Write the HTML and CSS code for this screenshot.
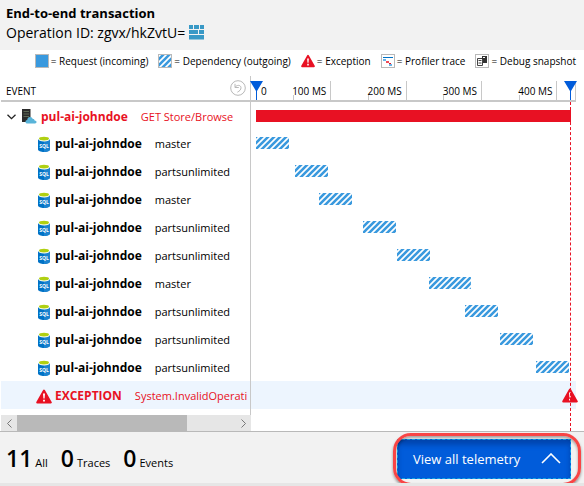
FILE: index.html
```html
<!DOCTYPE html>
<html lang="en">
<head>
<meta charset="utf-8">
<title>End-to-end transaction</title>
<link rel="stylesheet" href="styles.css">
</head>
<body>
<svg class="defs" aria-hidden="true">
  <defs>
    <pattern id="hatch" width="6" height="6" patternUnits="userSpaceOnUse">
      <rect width="6" height="6" fill="#fff"/>
      <path d="M-2 2L2 -2M-1 7L7 -1M4 8L8 4" stroke="#3999de" stroke-width="2.6"/>
    </pattern>
    <symbol id="warn" viewBox="0 0 16 15">
      <path d="M8 1.500L14.800 13.500H1.200Z" fill="#e81123" stroke="#e81123" stroke-width="2" stroke-linejoin="round"/>
      <path d="M7 4.500h2l-.4 5H7.400zM7.100 10.700h1.800v1.800H7.100z" fill="#fff"/>
    </symbol>
    <symbol id="sql" viewBox="0 0 14 16">
      <path d="M1 3v10.500c0 1.300 2.700 2.500 6 2.500s6-1.200 6-2.500V3z" fill="#0072c6"/>
      <path d="M7 3h6v10.500C13 14.800 10.300 16 7 16z" fill="#1c83cf"/>
      <ellipse cx="7" cy="2.800" rx="6" ry="2.600" fill="#fff"/>
      <ellipse cx="7" cy="2.600" rx="5" ry="1.900" fill="#b0d012"/>
      <text x="7" y="11.500" text-anchor="middle" class="sql-text">SQL</text>
    </symbol>
  </defs>
</svg>

<header class="top">
  <h1>End-to-end transaction</h1>
  <p>Operation ID: zgvx/hkZvtU=
    <svg class="grid-icon" viewBox="0 0 15 15"><path d="M0 0h4v4H0zM5 0h5v4H5zM11 0h4v4h-4zM0 5h9v4H0zM10 5h5v4h-5zM0 10h15v4.500H0z" fill="#3999c6"/></svg>
  </p>
</header>

<ul class="legend">
  <li><svg viewBox="0 0 14 14"><rect x=".5" y=".5" width="13" height="13" fill="#3999de" stroke="#b9b9b9"/></svg>= Request (incoming)</li>
  <li><svg viewBox="0 0 14 14"><rect x=".5" y=".5" width="13" height="13" fill="url(#hatch)" stroke="#b9b9b9"/></svg>= Dependency (outgoing)</li>
  <li><svg><use href="#warn"/></svg>= Exception</li>
  <li><svg viewBox="0 0 14 14"><rect x=".5" y=".5" width="13" height="13" fill="#fff" stroke="#b9b9b9"/><path d="M2 3.500h10" stroke="#0072c6"/><path d="M2 6h3M8 11h3" stroke="#3999de" stroke-width="1.500"/><path d="M5 8h3" stroke="#e81123" stroke-width="1.500"/><path d="M8 9.500h2" stroke="#e81123"/></svg>= Profiler trace</li>
  <li><svg viewBox="0 0 14 14"><rect x=".5" y=".5" width="13" height="13" fill="#fff" stroke="#b9b9b9"/><path d="M2.500 4.500h5v7h-5z" fill="#fff" stroke="#444"/><path d="M3.500 6.500h3M3.500 9h3" stroke="#444"/><path d="M7 2h5v7H8V5H7z" fill="#333"/><path d="M8 3.500h2" stroke="#fff"/></svg>= Debug snapshot</li>
</ul>

<main class="chart">
  <div class="row axis">
    <div class="name">
      <span class="title">EVENT</span>
      <button class="reset" aria-label="Reset zoom"><svg viewBox="0 0 16 16"><circle cx="8" cy="8" r="7.300"/><path d="M5 3.800v3.700h3.800M5.200 7.200C6.500 4.800 10.800 4.600 11 7.700c.1 2-1.500 3.300-3.600 4.500"/></svg></button>
    </div>
    <div class="scale">
      <span class="zero">0</span>
      <div class="ticks">
        <span>100 MS</span><span>200 MS</span><span>300 MS</span><span>400 MS</span>
      </div>
      <svg class="marker start" viewBox="0 0 13 19"><path d="M0 0h13L7 10v9H6v-9z"/></svg>
      <svg class="marker end" viewBox="0 0 13 19"><path d="M0 0h13L7 10v9H6v-9z"/></svg>
    </div>
  </div>

  <div class="row root">
    <div class="name">
      <svg class="chevron" viewBox="0 0 9 6"><path d="M.5 .7L4.500 4.700L8.500 .7"/></svg>
      <svg class="server" viewBox="0 0 16 15"><path d="M1 0h8.500v13H1z" fill="#2b2b2b"/><path d="M2.500 2.500h5.500M2.500 5h5.500M2.500 7.500h5.500" stroke="#5e6b56"/><path d="M6.500 14.500C4 14.500 3.700 11.200 6.200 11c.2-2 1.200-3 2.800-3 1.500 0 2.400.8 2.800 2 1.200-.1 1.700.6 1.800 1.500 2.600.2 2.400 3 .4 3z" fill="#59b4d9"/></svg>
      <b>pul-ai-johndoe</b><span>GET Store/Browse</span>
    </div>
    <div class="track"><i class="bar"></i></div>
  </div>
  <div class="row"><div class="name"><svg class="db"><use href="#sql"/></svg><b>pul-ai-johndoe</b><span>master</span></div><div class="track"><svg class="dep" style="margin-left:0%"><rect width="100%" height="100%" fill="url(#hatch)"/></svg></div></div>
  <div class="row"><div class="name"><svg class="db"><use href="#sql"/></svg><b>pul-ai-johndoe</b><span>partsunlimited</span></div><div class="track"><svg class="dep" style="margin-left:12.4%"><rect width="100%" height="100%" fill="url(#hatch)"/></svg></div></div>
  <div class="row"><div class="name"><svg class="db"><use href="#sql"/></svg><b>pul-ai-johndoe</b><span>master</span></div><div class="track"><svg class="dep" style="margin-left:20%"><rect width="100%" height="100%" fill="url(#hatch)"/></svg></div></div>
  <div class="row"><div class="name"><svg class="db"><use href="#sql"/></svg><b>pul-ai-johndoe</b><span>partsunlimited</span></div><div class="track"><svg class="dep" style="margin-left:34%"><rect width="100%" height="100%" fill="url(#hatch)"/></svg></div></div>
  <div class="row"><div class="name"><svg class="db"><use href="#sql"/></svg><b>pul-ai-johndoe</b><span>partsunlimited</span></div><div class="track"><svg class="dep" style="margin-left:44.8%"><rect width="100%" height="100%" fill="url(#hatch)"/></svg></div></div>
  <div class="row"><div class="name"><svg class="db"><use href="#sql"/></svg><b>pul-ai-johndoe</b><span>master</span></div><div class="track"><svg class="dep" style="margin-left:55%;width:13.3%"><rect width="100%" height="100%" fill="url(#hatch)"/></svg></div></div>
  <div class="row"><div class="name"><svg class="db"><use href="#sql"/></svg><b>pul-ai-johndoe</b><span>partsunlimited</span></div><div class="track"><svg class="dep" style="margin-left:66.4%"><rect width="100%" height="100%" fill="url(#hatch)"/></svg></div></div>
  <div class="row"><div class="name"><svg class="db"><use href="#sql"/></svg><b>pul-ai-johndoe</b><span>partsunlimited</span></div><div class="track"><svg class="dep" style="margin-left:77.5%"><rect width="100%" height="100%" fill="url(#hatch)"/></svg></div></div>
  <div class="row"><div class="name"><svg class="db"><use href="#sql"/></svg><b>pul-ai-johndoe</b><span>partsunlimited</span></div><div class="track"><svg class="dep" style="margin-left:88.9%"><rect width="100%" height="100%" fill="url(#hatch)"/></svg></div></div>
  <div class="row exception">
    <div class="name"><svg class="alert"><use href="#warn"/></svg><b>EXCEPTION</b><span>System.InvalidOperati</span></div>
    <div class="track"><svg class="pin"><use href="#warn"/></svg></div>
  </div>
  <div class="spacer"></div>
  <div class="scrollbar">
    <button aria-label="Scroll left"><svg viewBox="0 0 5 9"><path d="M4.500 .5L.5 4.500L4.500 8.500"/></svg></button>
    <div class="rail"><div class="thumb"></div></div>
    <button aria-label="Scroll right"><svg viewBox="0 0 5 9"><path d="M.5 .5L4.500 4.500L.5 8.500"/></svg></button>
  </div>
  <div class="endline"></div>
</main>

<footer class="bottom">
  <dl>
    <div><dd>11</dd><dt>All</dt></div>
    <div><dd>0</dd><dt>Traces</dt></div>
    <div><dd>0</dd><dt>Events</dt></div>
  </dl>
  <div class="action">
    <button class="view">View all telemetry<svg viewBox="0 0 20 11"><path d="M1 10L10 1L19 10"/></svg></button>
    <div class="ring"></div>
  </div>
</footer>
</body>
</html>
```
FILE: styles.css
```css
* { box-sizing: border-box; }
body {
  margin: 0;
  background: #e6e6e6;
  color: #000;
  font: 12px/16px "Open Sans", "Noto Sans", sans-serif;
}
svg { display: block; flex: none; }
button { border: 0; padding: 0; background: none; font: inherit; }
.defs { position: absolute; width: 0; height: 0; }
.sql-text { font: bold 5px "Open Sans", sans-serif; fill: #fff; }

.top { background: #f2f2f2; height: 50px; padding: 4px 6px; }
.top h1 { margin: 0; font-size: 13px; line-height: 19px; }
.top p { margin: 0; display: flex; align-items: center; gap: 4px; font-size: 14px; line-height: 19px; }
.grid-icon { width: 15px; height: 15px; }

.legend {
  margin: 0;
  height: 26px;
  padding: 0 8px 4px;
  background: #fff;
  list-style: none;
  display: flex;
  justify-content: flex-end;
  align-items: center;
  gap: 10px;
  font-size: 10px;
  white-space: nowrap;
}
.legend li { display: flex; align-items: center; gap: 2px; }
.legend svg { width: 14px; height: 14px; }

.chart { position: relative; background: #fff; padding: 0 8px 0 1px; }
.row { display: grid; grid-template-columns: 250px 1fr; height: 28px; }
.root { height: 27px; }
.name {
  display: flex;
  align-items: center;
  min-width: 0;
  padding: 2px 0 0 36px;
  border-right: 1px solid #c8c8c8;
  overflow: hidden;
  white-space: nowrap;
}
.name b { margin-left: 4px; }
.name span { margin-left: 13px; font-size: 11px; }
.track { position: relative; display: flex; align-items: center; padding: 0 5px; }

.axis { height: 26px; border-bottom: 2px solid #c8c8c8; }
.axis .name { padding: 0 4px 0 5px; justify-content: space-between; }
.axis .title { margin: 0; font-size: 10px; padding-top: 6px; }
.reset svg { width: 16px; height: 16px; fill: none; stroke: #b8b8b8; }
.scale { position: relative; margin: 5px 0 0; padding: 0 5px; border-right: 1px solid #c8c8c8; }
.ticks { display: flex; height: 100%; }
.ticks span {
  flex: 0 0 24%;
  padding: 2px 4px 0 0;
  border-right: 1px solid #c8c8c8;
  background: linear-gradient(#c8c8c8, #c8c8c8) 50% 100% / 1px 5px no-repeat;
  font-size: 10px;
  text-align: right;
}
.zero { position: absolute; left: 10px; top: 2px; font-size: 10px; }
.marker { position: absolute; top: 0; width: 13px; height: 19px; fill: #015cda; }
.marker.start { left: -1px; }
.marker.end { right: -2px; }

.root .name { padding-left: 6px; color: #e81123; }
.chevron { width: 9px; height: 6px; margin-right: 5px; fill: none; stroke: #222; stroke-width: 1.3; }
.server { width: 16px; height: 15px; }
.db { width: 14px; height: 16px; }
.bar { width: 100%; height: 12px; background: #e81123; }
.dep { width: 10.5%; height: 12px; }

.exception { background: #edf5fe; color: #e81123; }
.exception .name { padding-left: 35px; }
.exception b { margin-left: 3px; }
.alert { width: 16px; height: 15px; }
.pin { position: absolute; right: -2px; width: 16px; height: 15px; }

.spacer { width: 250px; height: 6px; border-right: 1px solid #c8c8c8; }
.scrollbar { display: flex; width: 250px; height: 16px; background: #e6e6e6; }
.scrollbar button { width: 16px; display: grid; place-items: center; }
.scrollbar button svg { width: 5px; height: 9px; fill: none; stroke: #777; }
.rail { flex: 1; }
.thumb { width: 78%; height: 100%; background: #b9b9b9; }
.endline { position: absolute; top: 26px; bottom: 0; right: 13px; border-left: 1px dashed #e81123; }

.bottom {
  display: flex;
  align-items: center;
  justify-content: space-between;
  height: 52px;
  padding: 0 13px 0 6px;
  border-top: 1px solid #b9b9b9;
  background: #f2f2f2;
}
.bottom dl { display: flex; gap: 13px; margin: 0; }
.bottom dl div { display: flex; align-items: baseline; gap: 3px; }
.bottom dt { font-size: 11px; }
.bottom dd { margin: 0; font-size: 23px; line-height: 32px; font-weight: 600; }
.action { position: relative; padding-top: 2px; }
.view {
  display: flex;
  align-items: center;
  justify-content: space-between;
  width: 174px;
  height: 40px;
  padding: 0 9px 0 15px;
  background: #015cda;
  border: 1px dashed #10a5e8;
  box-shadow: inset 0 5px 5px #0046b0;
  color: #fff;
  font-size: 13px;
}
.view svg { width: 20px; height: 11px; fill: none; stroke: #fff; stroke-width: 1.6; }
.ring {
  position: absolute;
  inset: -4px -10px -7px -4px;
  border: 3px solid #f84545;
  border-radius: 18px;
  box-shadow: 0 2px 3px #0006, inset 0 2px 3px #0005;
  pointer-events: none;
}
```
